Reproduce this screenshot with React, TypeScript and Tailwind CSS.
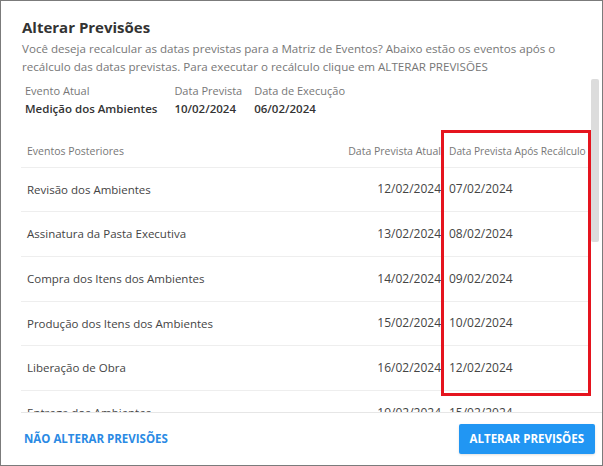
const rows = [
  { name: "Revisão dos Ambientes", atual: "12/02/2024", nova: "07/02/2024" },
  { name: "Assinatura da Pasta Executiva", atual: "13/02/2024", nova: "08/02/2024" },
  { name: "Compra dos Itens dos Ambientes", atual: "14/02/2024", nova: "09/02/2024" },
  { name: "Produção dos Itens dos Ambientes", atual: "15/02/2024", nova: "10/02/2024" },
  { name: "Liberação de Obra", atual: "16/02/2024", nova: "12/02/2024" },
  { name: "Entrega dos Ambientes", atual: "19/02/2024", nova: "15/02/2024" },
  { name: "Montagem dos Ambientes", atual: "20/02/2024", nova: "16/02/2024" },
];

export default function App() {
  return (
    <div className="relative flex h-[466px] w-[603px] flex-col overflow-hidden border border-[#7b7b7b] bg-white font-['Open_Sans',sans-serif]">
      <div className="px-[21px] pt-[14px]">
        <h2 className="text-[15px] font-bold leading-[24px] text-[#333]">Alterar Previsões</h2>
        <p className="mt-[1px] text-[11.6px] leading-[18px] text-[#777]">
          Você deseja recalcular as datas previstas para a Matriz de Eventos? Abaixo estão os eventos após o recálculo das
          datas previstas. Para executar o recálculo clique em ALTERAR PREVISÕES
        </p>
      </div>

      <div className="relative mt-[3px] flex min-h-0 flex-1">
        <div className="min-w-0 flex-1 overflow-hidden pl-[20px]">
          <div className="flex gap-[18px] pl-[4px] pt-[3px]">
            <div>
              <p className="text-[11px] leading-[17px] text-[#777]">Evento Atual</p>
              <p className="text-[11.5px] font-semibold leading-[19px] text-[#333]">Medição dos Ambientes</p>
            </div>
            <div className="-ml-[1px]">
              <p className="text-[11px] leading-[17px] text-[#777]">Data Prevista</p>
              <p className="text-[11.5px] font-semibold leading-[19px] text-[#333]">10/02/2024</p>
            </div>
            <div className="-ml-[6px]">
              <p className="text-[11px] leading-[17px] text-[#777]">Data de Execução</p>
              <p className="text-[11.5px] font-semibold leading-[19px] text-[#333]">06/02/2024</p>
            </div>
          </div>

          <table className="mt-[19px] w-[568px] border-collapse">
            <thead>
              <tr className="h-[30px] border-b border-[#eee] align-bottom text-[10.5px] text-[#777]">
                <th className="pb-[7px] pl-[6px] text-left font-normal">Eventos Posteriores</th>
                <th className="pb-[7px] pr-[2px] text-right font-normal">Data Prevista Atual</th>
                <th className="w-[146px] whitespace-nowrap pb-[7px] pl-[6px] text-left text-[10.2px] font-normal">
                  Data Prevista Após Recálculo
                </th>
              </tr>
            </thead>
            <tbody>
              {rows.map((row) => (
                <tr className="h-[44.7px] border-b border-[#eee] text-[12px] text-[#444]" key={row.name}>
                  <td className="pl-[6px] text-[11.5px]">{row.name}</td>
                  <td className="pr-[2px] text-right">{row.atual}</td>
                  <td className="pl-[6px]">{row.nova}</td>
                </tr>
              ))}
            </tbody>
          </table>
        </div>

        <div className="w-[11px] shrink-0 pr-[3px]">
          <div className="h-[163px] w-[8px] rounded-[2px] bg-[#dcdcdc]" />
        </div>

        {/* highlight box around the recalculated column */}
        <div className="pointer-events-none absolute left-[440px] top-[51px] h-[266px] w-[150px] border-[3px] border-[#e5141e]" />
      </div>

      <div className="ml-[20px] flex h-[53px] shrink-0 items-center justify-between border-t border-[#e6e6e6] pr-[7px]">
        <button className="ml-[3px] text-[11.5px] font-bold leading-[16px] text-[#2a8ae4]">NÃO ALTERAR PREVISÕES</button>
        <button className="h-[30px] rounded-[2px] bg-[#2196f3] px-[11px] text-[11.5px] font-bold leading-[16px] text-white shadow-sm">
          ALTERAR PREVISÕES
        </button>
      </div>
    </div>
  );
}
